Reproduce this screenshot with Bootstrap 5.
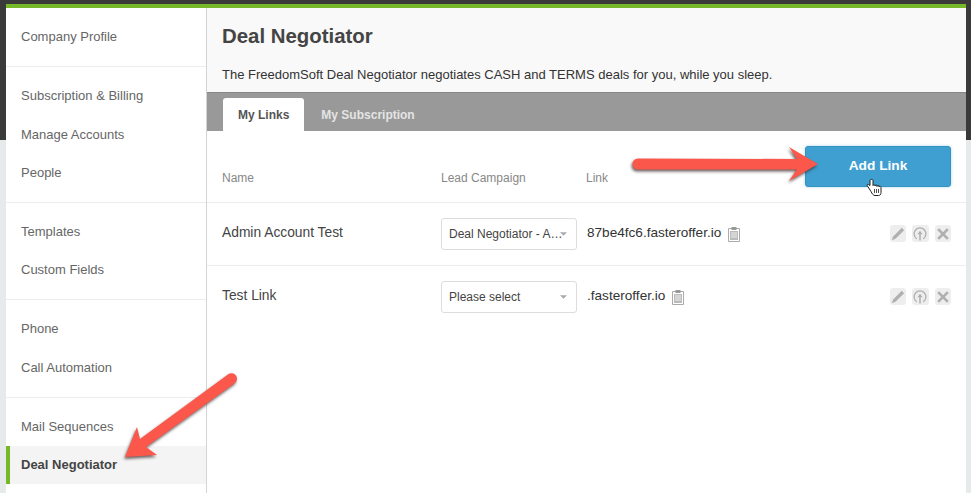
<!doctype html>
<html lang="en">
<head>
<meta charset="utf-8">
<title>Deal Negotiator</title>
<link href="https://cdn.jsdelivr.net/npm/bootstrap@5.3.0/dist/css/bootstrap.min.css" rel="stylesheet">
<style>
html,body{height:493px;overflow:hidden}
body{position:relative;background:linear-gradient(#3a3a3a 0,#3a3a3a 140px,#e6eaea 140px);padding:4px 5px 0 6px;font-family:"Liberation Sans",Arial,sans-serif;font-size:13px;color:#444}
.shell{height:489px;background:#fff;border-top:4px solid #76b82a}
.side{width:201px;flex:none;border-right:1px solid #d4d4d4}
.side-group{padding:9px 0 10.5px;border-bottom:1px solid #ececec}
.side-group.g-three{padding:8.75px 0 10.25px}
.side-group.g-four{padding:9px 0 11px}
.side-group:last-child{border-bottom:0}
.side-link{display:block;height:38.5px;line-height:39px;padding-left:15px;color:#666;text-decoration:none;font-size:13px}
.side-link.on{background:#f4f4f4;border-left:4px solid #76b82a;padding-left:11px;color:#444;font-weight:700;line-height:38px}
.head-box{height:84px;background:#f9f9f9;padding:16px 15px 0}
.head-box h1{font-size:20.4px;font-weight:700;line-height:24px;color:#444;margin:0 0 16px}
.head-box p{font-size:13px;line-height:22px;color:#333;margin:0}
.tab-strip{height:39px;background:#999;border-top:1px solid #868686;padding:5px 0 0 16px;border-bottom:0}
.tab-strip .nav-link{height:33px;padding:0 15px;line-height:34px;font-size:12px;font-weight:700;color:#e4e4e4;border:0;border-radius:3px 3px 0 0;margin:0 2px 0 0}
.tab-strip .nav-link.active{background:#fff;color:#555}
.row-line{border-bottom:1px solid #ececec;padding:15px}
.row-line.last-line{border-bottom:0;height:62px}
.col-name{width:219px;flex:none}
.col-camp{width:146px;flex:none}
.th-cell{align-self:flex-end;font-size:12px;color:#888;line-height:14px;padding-bottom:2px}
.th-link{margin-left:-1px}
.add-btn{width:146px;height:41px;background:#3e9fd0;border:1px solid #3593c2;border-radius:3px;color:#fff;font-weight:700;font-size:13.7px;padding:0;box-shadow:0 0 3px rgba(62,159,208,.45)}
.add-btn:hover{background:#3e9fd0;border-color:#3593c2;color:#fff}
.data-line{height:63px;padding:15px}
.data-name{font-size:13.8px;color:#444;line-height:16px;margin-top:-3px}
.pick{width:136px;height:32px;padding:0 12px 0 7px;font-size:12px;line-height:30px;color:#444;border:1px solid #ddd;border-radius:3px;text-overflow:ellipsis;background-size:7px 4px;background-position:right 9px center;background-image:url("data:image/svg+xml,%3Csvg xmlns='http://www.w3.org/2000/svg' viewBox='0 0 8 4'%3E%3Cpath fill='%23aaa' d='M0 0h8L4 4z'/%3E%3C/svg%3E")}
.data-link{font-size:13.6px;color:#333;line-height:16px;margin-top:-3px}
.clip{width:14px;height:16px;margin-left:6px;margin-top:2px}
.tools-set{gap:6px;margin-top:-1px}
.tool{width:16.5px;height:17px;background:#eee;border:0;border-radius:3px;padding:0;display:flex;align-items:center;justify-content:center}
.tool svg{width:14px;height:14px}
.over{position:absolute;left:0;top:0;width:971px;height:493px;pointer-events:none}
.over .arrow{filter:drop-shadow(-1px 2px 1.5px rgba(60,40,40,.75))}
</style>
</head>
<body>
<div class="shell d-flex">
  <nav class="side d-flex flex-column">
    <div class="side-group"><a class="side-link" href="#">Company Profile</a></div>
    <div class="side-group"><a class="side-link" href="#">Subscription &amp; Billing</a><a class="side-link" href="#">Manage Accounts</a><a class="side-link" href="#">People</a></div>
    <div class="side-group g-three"><a class="side-link" href="#">Templates</a><a class="side-link" href="#">Custom Fields</a></div>
    <div class="side-group g-four"><a class="side-link" href="#">Phone</a><a class="side-link" href="#">Call Automation</a></div>
    <div class="side-group"><a class="side-link" href="#">Mail Sequences</a><a class="side-link on" href="#">Deal Negotiator</a></div>
  </nav>
  <main class="flex-grow-1">
    <div class="head-box">
      <h1>Deal Negotiator</h1>
      <p>The FreedomSoft Deal Negotiator negotiates CASH and TERMS deals for you, while you sleep.</p>
    </div>
    <ul class="nav tab-strip">
      <li class="nav-item"><a class="nav-link active" href="#">My Links</a></li>
      <li class="nav-item"><a class="nav-link" href="#">My Subscription</a></li>
    </ul>
    <div class="row-line d-flex">
      <div class="th-cell col-name">Name</div>
      <div class="th-cell col-camp">Lead Campaign</div>
      <div class="th-cell th-link">Link</div>
      <button class="btn add-btn ms-auto" type="button">Add Link</button>
    </div>
    <div class="data-line row-line d-flex align-items-center">
      <div class="data-name col-name">Admin Account Test</div>
      <div class="col-camp"><select class="form-select pick"><option>Deal Negotiator - Admin Account Test</option></select></div>
      <div class="data-link d-flex align-items-center">87be4fc6.fasteroffer.io
        <svg class="clip" viewBox="0 0 14 16"><path fill="#fff" stroke="#aaa" d="M1.5 2.5h11v13h-11z"/><path fill="#bbb" d="M3 5h8v9H3z"/><path fill="#999" d="M4.500 1h5v3h-5z"/><path stroke="#eee" d="M4 7h6M4 9h6M4 11h6"/></svg>
      </div>
      <div class="ms-auto d-flex tools-set">
        <button class="tool" type="button" aria-label="Edit"><svg viewBox="0 0 13 13"><path fill="#b0b0b0" d="M10 .8l2.200 2.200-8 8-3.500 1.300 1.300-3.500z"/></svg></button>
        <button class="tool" type="button" aria-label="Publish"><svg viewBox="0 0 13 13"><path fill="none" stroke="#b0b0b0" stroke-width="1.200" d="M3.500 11a5.500 5.500 0 1 1 6 0"/><path fill="#b0b0b0" d="M6.500 3.500l2.400 3.200H7.200V12.500H5.800V6.700H4.100z"/></svg></button>
        <button class="tool" type="button" aria-label="Delete"><svg viewBox="0 0 13 13"><path stroke="#b0b0b0" stroke-width="2.500" d="M2 2l9 9M11 2l-9 9"/></svg></button>
      </div>
    </div>
    <div class="data-line row-line last-line d-flex align-items-center">
      <div class="data-name col-name">Test Link</div>
      <div class="col-camp"><select class="form-select pick"><option>Please select</option></select></div>
      <div class="data-link d-flex align-items-center">.fasteroffer.io
        <svg class="clip" viewBox="0 0 14 16"><path fill="#fff" stroke="#aaa" d="M1.5 2.5h11v13h-11z"/><path fill="#bbb" d="M3 5h8v9H3z"/><path fill="#999" d="M4.500 1h5v3h-5z"/><path stroke="#eee" d="M4 7h6M4 9h6M4 11h6"/></svg>
      </div>
      <div class="ms-auto d-flex tools-set">
        <button class="tool" type="button" aria-label="Edit"><svg viewBox="0 0 13 13"><path fill="#b0b0b0" d="M10 .8l2.200 2.200-8 8-3.500 1.300 1.300-3.500z"/></svg></button>
        <button class="tool" type="button" aria-label="Publish"><svg viewBox="0 0 13 13"><path fill="none" stroke="#b0b0b0" stroke-width="1.200" d="M3.500 11a5.500 5.500 0 1 1 6 0"/><path fill="#b0b0b0" d="M6.500 3.500l2.400 3.200H7.200V12.500H5.800V6.700H4.100z"/></svg></button>
        <button class="tool" type="button" aria-label="Delete"><svg viewBox="0 0 13 13"><path stroke="#b0b0b0" stroke-width="2.500" d="M2 2l9 9M11 2l-9 9"/></svg></button>
      </div>
    </div>
  </main>
</div>
<svg class="over" viewBox="0 0 971 493">
  <path class="arrow" fill="#fb574a" d="M638 158.500L797 159L789 147L818 164L789 181L797 169.500L638 169.500A5.500 5.500 0 0 1 638 158.500Z"/>
  <path class="arrow" fill="#fb574a" d="M228 374.500A5.500 5.500 0 0 1 235 383L146 447L157 455L125 457L137 427L140 439Z"/>
  <path fill="#fff" stroke="#222" stroke-width="1" stroke-linejoin="round" d="M870 180.500V185.500L868.500 184.500C867.500 184 866.500 185 867.500 186L871 191.500C872 193.500 873 195.500 875 195.500H878.500C880 195.500 881 194.500 881 192.500V187.500C881 186 879 186 879 187V186.500C879 185 877 185 877 186.500V186C877 184.500 875 184.500 875 186V185.500C875 184.500 873 184.500 873 185.500V180.500C873 179 870 179 870 180.500Z"/>
  <path stroke="#222" stroke-width=".8" d="M874.500 189v4M876.500 189v4M878.500 189v4"/>
</svg>
<script src="https://cdn.jsdelivr.net/npm/bootstrap@5.3.0/dist/js/bootstrap.bundle.min.js"></script>
</body>
</html>
